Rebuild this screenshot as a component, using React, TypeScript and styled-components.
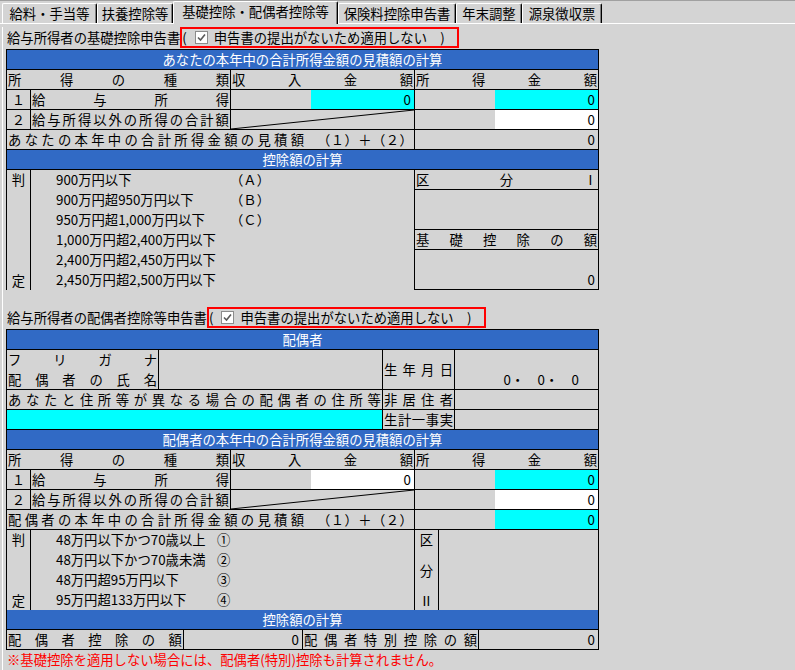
import React from "react";
import styled, { createGlobalStyle } from "styled-components";

const GRAY = "#d4d4d4";
const BLUE = "#316ac5";
const CYAN = "#00ffff";
const WHITE = "#ffffff";

const INCOME_COLS = "23px 199px 183px 183px";

const GlobalStyle = createGlobalStyle`
  html, body {
    margin: 0;
    padding: 0;
    background: ${GRAY};
  }
  body {
    font-family: "Noto Sans CJK JP", "Noto Sans", sans-serif;
    font-size: 13.33px;
    color: #000;
  }
`;

const Screen = styled.div`
  width: 795px;
  height: 670px;
  overflow: hidden;
  background: ${GRAY};
`;

/* ---------- tabs ---------- */
const TabBar = styled.div`
  display: flex;
  align-items: flex-end;
  height: 22px;
  padding-left: 2px;
  border-top: 1px solid #a0a0a0;
  border-bottom: 1px solid #fff;
`;

const Tab = styled.div<{ $w: number; $active?: boolean }>`
  box-sizing: border-box;
  flex: 0 0 ${(p) => p.$w}px;
  height: ${(p) => (p.$active ? 23 : 20)}px;
  margin-bottom: ${(p) => (p.$active ? -1 : 0)}px;
  position: relative;
  z-index: ${(p) => (p.$active ? 1 : 0)};
  background: ${GRAY};
  border-top: 1px solid #fff;
  border-left: 1px solid #fff;
  border-right: 1px solid #000;
  box-shadow: inset -1px 0 #808080;
  border-radius: 2px 2px 0 0;
  text-align: center;
  line-height: ${(p) => (p.$active ? 20 : 19)}px;
  white-space: nowrap;
`;

/* ---------- page body ---------- */
const Panel = styled.div`
  margin-left: 2px;
  border-left: 1px solid #fff;
  padding: 0 0 0 3px;
  height: 646px;
`;

const Heading = styled.div<{ $top: number }>`
  display: flex;
  align-items: flex-start;
  height: 22px;
  margin-top: ${(p) => p.$top}px;
  padding-left: 1px;
  white-space: nowrap;
  line-height: 21px;
`;

const RedBox = styled.div`
  box-sizing: border-box;
  width: 279px;
  height: 21px;
  border: 2px solid #ff0000;
  display: flex;
  align-items: center;
  line-height: 17px;
`;

const CheckMark = styled.svg`
  flex: 0 0 13px;
  margin: 0 6px 0 8px;
`;

const Table = styled.div`
  box-sizing: border-box;
  width: 593px;
  display: flex;
  flex-direction: column;
  gap: 1px;
  background: #000;
  border: 1px solid #000;
  line-height: 19px;
`;

const BlueBar = styled.div`
  height: 19px;
  background: ${BLUE};
  color: #fff;
  text-align: center;
  white-space: nowrap;
`;

const Row = styled.div<{ $cols: string; $h?: number }>`
  display: grid;
  grid-template-columns: ${(p) => p.$cols};
  gap: 1px;
  height: ${(p) => p.$h ?? 19}px;
`;

const Cell = styled.div<{
  $bg?: string;
  $align?: "left" | "center" | "right";
  $valign?: "center" | "bottom";
  $span?: number;
}>`
  grid-column: span ${(p) => p.$span ?? 1};
  background: ${(p) => p.$bg ?? GRAY};
  display: flex;
  align-items: ${(p) => (p.$valign === "bottom" ? "flex-end" : "center")};
  justify-content: ${(p) =>
    p.$align === "right" ? "flex-end" : p.$align === "center" ? "center" : "flex-start"};
  padding: 0 1px;
  min-width: 0;
  white-space: nowrap;
  overflow: hidden;
`;

const Spread = styled.span`
  display: flex;
  justify-content: space-between;
  width: 100%;
`;

const Num = styled.span<{ $pr?: number }>`
  padding-right: ${(p) => p.$pr ?? 2}px;
`;

const AmountCell = styled.div`
  background: ${GRAY};
  display: flex;
  justify-content: flex-end;
`;

const Field = styled.div<{ $bg: string }>`
  box-sizing: border-box;
  width: 103px;
  height: 100%;
  background: ${(p) => p.$bg};
  text-align: right;
  padding-right: 3px;
`;

const DiagCell = styled.div`
  background: ${GRAY};
  svg {
    display: block;
    width: 100%;
    height: 100%;
  }
`;

const TotalLabel = styled.span`
  flex: 0 0 296px;
  display: flex;
`;

const TotalSum = styled.span`
  flex: 1;
  display: flex;
  margin-left: 13px;
`;

const SideCell = styled.div`
  background: ${GRAY};
  display: flex;
  flex-direction: column;
  justify-content: space-between;
  align-items: center;
`;

const ListCell = styled.div`
  background: ${GRAY};
  padding-left: 25px;
  line-height: 20px;
  white-space: nowrap;
`;

const Item = styled.div`
  display: flex;
`;

const ItemLabel = styled.span<{ $w: number }>`
  flex: 0 0 ${(p) => p.$w}px;
`;

const Stack = styled.div`
  display: flex;
  flex-direction: column;
  gap: 1px;
  background: #000;
`;

const StackCell = styled(Cell)<{ $h: number }>`
  flex: 0 0 ${(p) => p.$h}px;
`;

const NameLabel = styled.div`
  background: ${GRAY};
  display: flex;
  flex-direction: column;
  justify-content: space-between;
  padding: 0 1px;
`;

const Note = styled.div`
  color: #ff0000;
  line-height: 19px;
  padding-left: 1px;
  white-space: nowrap;
`;

const spread = (s: string) => (
  <Spread>
    {Array.from(s).map((c, i) => (
      <span key={i}>{c}</span>
    ))}
  </Spread>
);

const CheckBox = () => (
  <CheckMark width="13" height="13" viewBox="0 0 13 13">
    <rect x="0.5" y="0.5" width="12" height="12" fill="#fff" stroke="#8c8c8c" />
    <polyline points="3,6.5 5.5,9 10,3.5" fill="none" stroke="#5a5a5a" strokeWidth="1.6" />
  </CheckMark>
);

const NoticeBox = () => (
  <RedBox>
    <span>(</span>
    <CheckBox />
    <span>申告書の提出がないため適用しない　)</span>
  </RedBox>
);

type IncomeProps = {
  title: string;
  totalLabel: string;
  salary: string;
  income1: string;
  income2: string;
  incomeTotal: string;
};

const IncomeBlock = ({ title, totalLabel, salary, income1, income2, incomeTotal }: IncomeProps) => (
  <>
    <BlueBar>{title}</BlueBar>
    <Row $cols={INCOME_COLS}>
      <Cell $span={2}>{spread("所得の種類")}</Cell>
      <Cell>{spread("収入金額")}</Cell>
      <Cell>{spread("所得金額")}</Cell>
    </Row>
    <Row $cols={INCOME_COLS}>
      <Cell $align="center">１</Cell>
      <Cell>{spread("給与所得")}</Cell>
      <AmountCell>
        <Field $bg={salary}>0</Field>
      </AmountCell>
      <AmountCell>
        <Field $bg={income1}>0</Field>
      </AmountCell>
    </Row>
    <Row $cols={INCOME_COLS}>
      <Cell $align="center">２</Cell>
      <Cell>{spread("給与所得以外の所得の合計額")}</Cell>
      <DiagCell>
        <svg viewBox="0 0 183 19" preserveAspectRatio="none">
          <line x1="0" y1="19" x2="183" y2="0" stroke="#000" strokeWidth="1" />
        </svg>
      </DiagCell>
      <AmountCell>
        <Field $bg={income2}>0</Field>
      </AmountCell>
    </Row>
    <Row $cols={INCOME_COLS}>
      <Cell $span={3}>
        <TotalLabel>{spread(totalLabel)}</TotalLabel>
        <TotalSum>{spread("（１）＋（２）")}</TotalSum>
      </Cell>
      <AmountCell>
        <Field $bg={incomeTotal}>0</Field>
      </AmountCell>
    </Row>
  </>
);

const basicRanges: [string, string][] = [
  ["900万円以下", "（Ａ）"],
  ["900万円超950万円以下", "（Ｂ）"],
  ["950万円超1,000万円以下", "（Ｃ）"],
  ["1,000万円超2,400万円以下", ""],
  ["2,400万円超2,450万円以下", ""],
  ["2,450万円超2,500万円以下", ""],
];

const spouseRanges: [string, string][] = [
  ["48万円以下かつ70歳以上", "①"],
  ["48万円以下かつ70歳未満", "②"],
  ["48万円超95万円以下", "③"],
  ["95万円超133万円以下", "④"],
];

const RangeList = ({ items, labelW }: { items: [string, string][]; labelW: number }) => (
  <ListCell>
    {items.map(([a, b]) => (
      <Item key={a}>
        <ItemLabel $w={labelW}>{a}</ItemLabel>
        <span>{b}</span>
      </Item>
    ))}
  </ListCell>
);

const tabs = [
  { label: "給料・手当等", w: 95 },
  { label: "扶養控除等", w: 76 },
  { label: "基礎控除・配偶者控除等", w: 165, active: true },
  { label: "保険料控除申告書", w: 118 },
  { label: "年末調整", w: 66 },
  { label: "源泉徴収票", w: 80 },
];

export default function App() {
  return (
    <Screen>
      <GlobalStyle />
      <TabBar>
        {tabs.map((t) => (
          <Tab key={t.label} $w={t.w} $active={t.active}>
            {t.label}
          </Tab>
        ))}
      </TabBar>

      <Panel>
        <Heading $top={3}>
          <span>給与所得者の基礎控除申告書</span>
          <NoticeBox />
        </Heading>
        <Table>
          <IncomeBlock
            title="あなたの本年中の合計所得金額の見積額の計算"
            totalLabel="あなたの本年中の合計所得金額の見積額"
            salary={CYAN}
            income1={CYAN}
            income2={WHITE}
            incomeTotal={GRAY}
          />
          <BlueBar>控除額の計算</BlueBar>
          <Row $cols="23px 383px 183px" $h={119}>
            <SideCell>
              <span>判</span>
              <span>定</span>
            </SideCell>
            <RangeList items={basicRanges} labelW={174} />
            <Stack>
              <StackCell $h={19}>{spread("区分Ⅰ")}</StackCell>
              <StackCell $h={39} />
              <StackCell $h={19}>{spread("基礎控除の額")}</StackCell>
              <StackCell $h={39} $align="right" $valign="bottom">
                <Num>0</Num>
              </StackCell>
            </Stack>
          </Row>
        </Table>

        <Heading $top={17}>
          <span>給与所得者の配偶者控除等申告書</span>
          <NoticeBox />
        </Heading>
        <Table>
          <BlueBar>配偶者</BlueBar>
          <Row $cols="151px 223px 71px 143px" $h={39}>
            <NameLabel>
              {spread("フリガナ")}
              {spread("配偶者の氏名")}
            </NameLabel>
            <Cell />
            <Cell>{spread("生年月日")}</Cell>
            <Cell $align="right" $valign="bottom">
              <Num $pr={18}>0・　0・　0</Num>
            </Cell>
          </Row>
          <Row $cols="375px 71px 143px">
            <Cell>{spread("あなたと住所等が異なる場合の配偶者の住所等")}</Cell>
            <Cell>{spread("非居住者")}</Cell>
            <Cell />
          </Row>
          <Row $cols="375px 71px 143px">
            <Cell $bg={CYAN} />
            <Cell>{spread("生計一事実")}</Cell>
            <Cell />
          </Row>
          <IncomeBlock
            title="配偶者の本年中の合計所得金額の見積額の計算"
            totalLabel="配偶者の本年中の合計所得金額の見積額"
            salary={WHITE}
            income1={CYAN}
            income2={WHITE}
            incomeTotal={CYAN}
          />
          <Row $cols="23px 383px 23px 159px" $h={79}>
            <SideCell>
              <span>判</span>
              <span>定</span>
            </SideCell>
            <RangeList items={spouseRanges} labelW={161} />
            <SideCell>
              <span>区</span>
              <span>分</span>
              <span>Ⅱ</span>
            </SideCell>
            <Cell />
          </Row>
          <BlueBar>控除額の計算</BlueBar>
          <Row $cols="176px 118px 175px 119px">
            <Cell>{spread("配偶者控除の額")}</Cell>
            <Cell $align="right">
              <Num>0</Num>
            </Cell>
            <Cell>{spread("配偶者特別控除の額")}</Cell>
            <Cell $align="right">
              <Num>0</Num>
            </Cell>
          </Row>
        </Table>
        <Note>※基礎控除を適用しない場合には、配偶者(特別)控除も計算されません。</Note>
      </Panel>
    </Screen>
  );
}
